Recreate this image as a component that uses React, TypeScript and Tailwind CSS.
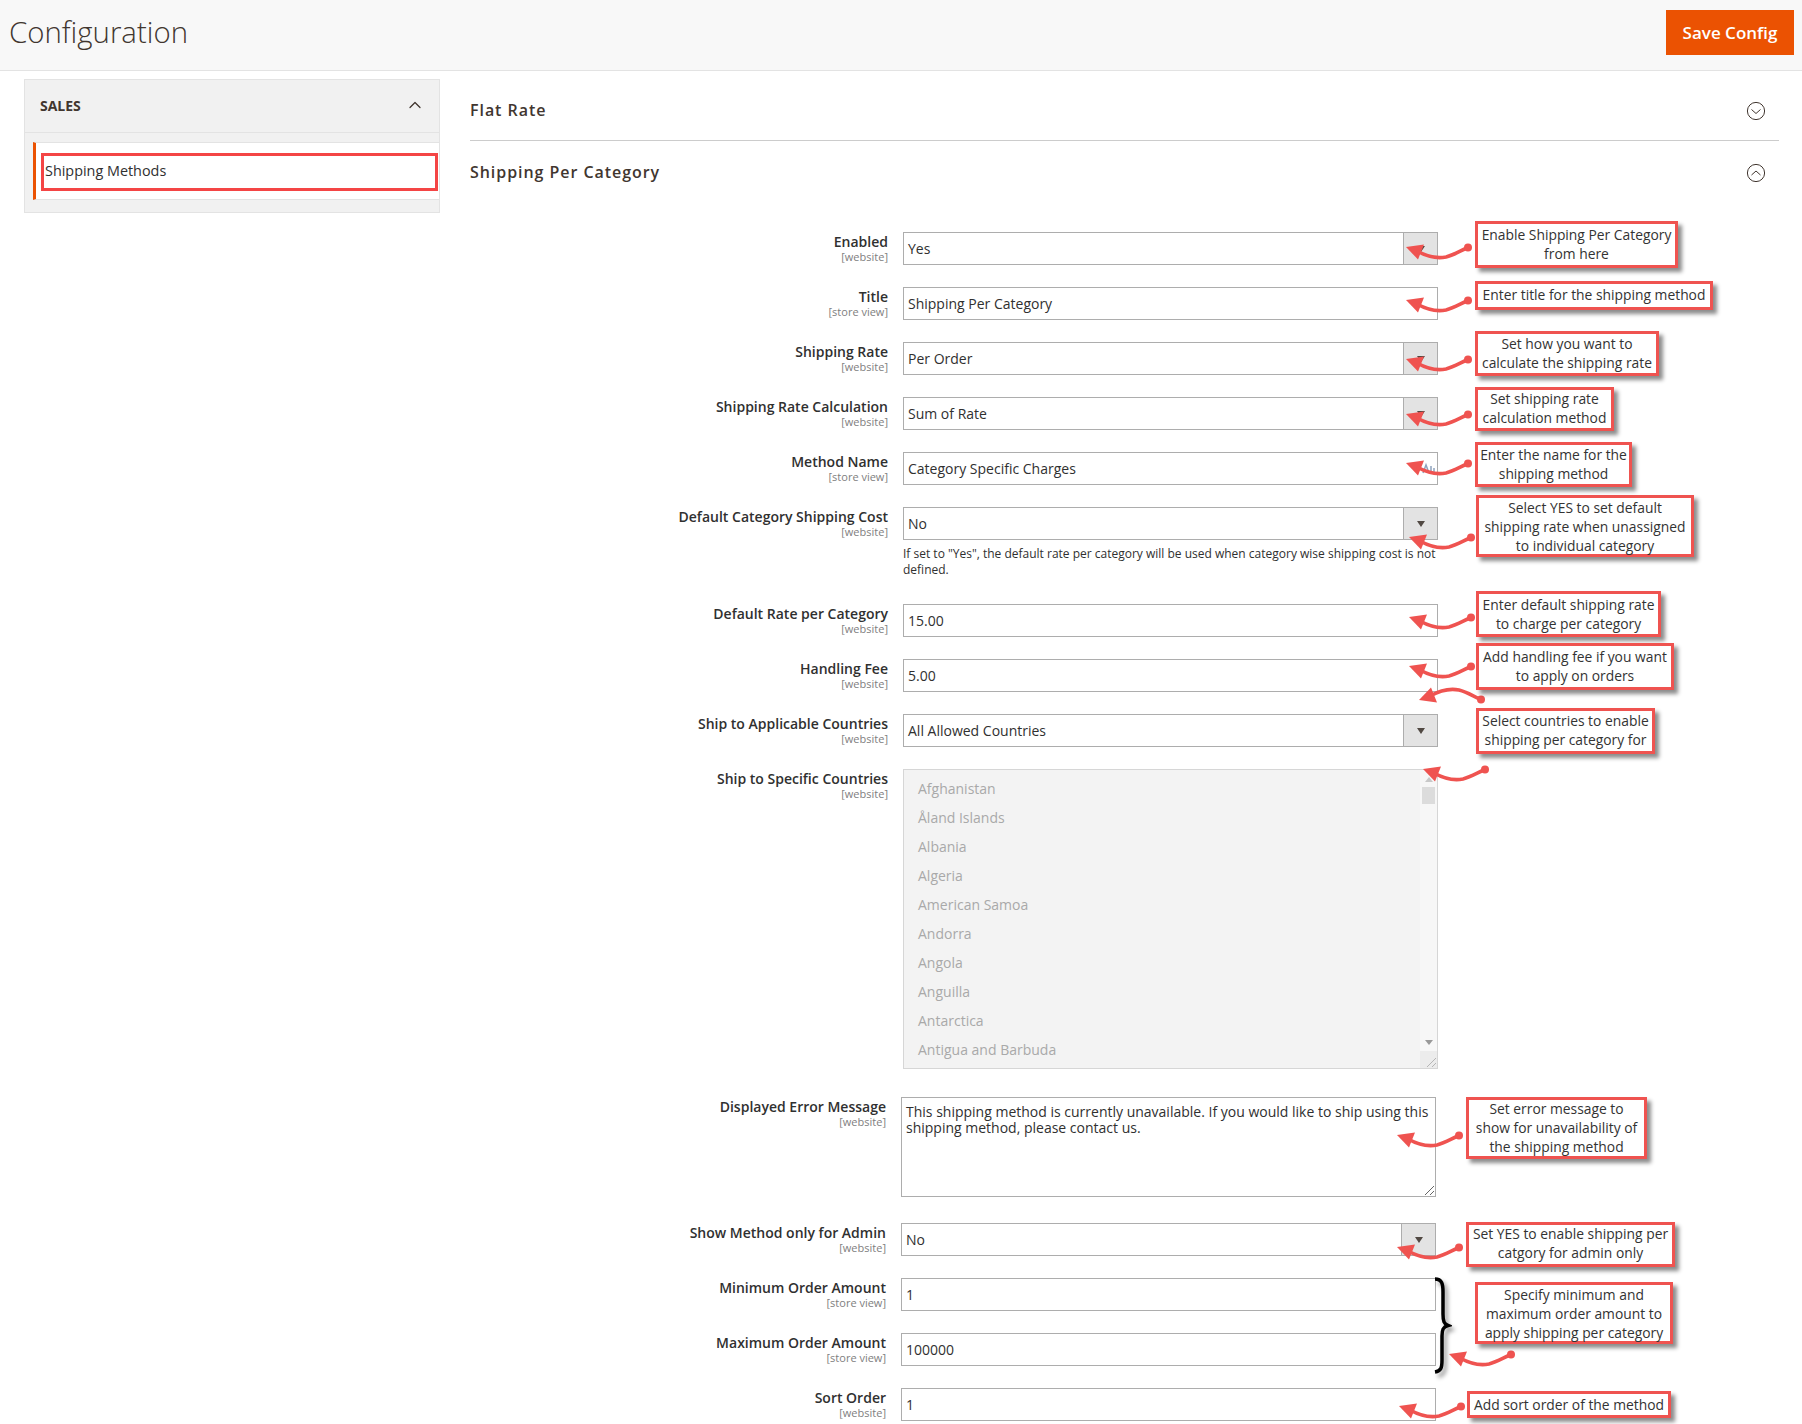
import React from 'react';
import { ChevronUp } from 'lucide-react';

const FONT = 'font-["Open_Sans",sans-serif]';

type Row = {
    label: string;
    scope: string;
    value: string;
    select?: boolean;
    note?: string;
};

const topRows: Row[] = [
    { label: 'Enabled', scope: '[website]', value: 'Yes', select: true },
    { label: 'Title', scope: '[store view]', value: 'Shipping Per Category' },
    { label: 'Shipping Rate', scope: '[website]', value: 'Per Order', select: true },
    { label: 'Shipping Rate Calculation', scope: '[website]', value: 'Sum of Rate', select: true },
    { label: 'Method Name', scope: '[store view]', value: 'Category Specific Charges' },
    {
        label: 'Default Category Shipping Cost',
        scope: '[website]',
        value: 'No',
        select: true,
        note: 'If set to "Yes", the default rate per category will be used when category wise shipping cost is not defined.',
    },
    { label: 'Default Rate per Category', scope: '[website]', value: '15.00' },
    { label: 'Handling Fee', scope: '[website]', value: '5.00' },
    { label: 'Ship to Applicable Countries', scope: '[website]', value: 'All Allowed Countries', select: true },
];

const bottomRows: Row[] = [
    { label: 'Show Method only for Admin', scope: '[website]', value: 'No', select: true },
    { label: 'Minimum Order Amount', scope: '[store view]', value: '1' },
    { label: 'Maximum Order Amount', scope: '[store view]', value: '100000' },
    { label: 'Sort Order', scope: '[website]', value: '1' },
];

const countries = [
    'Afghanistan',
    'Åland Islands',
    'Albania',
    'Algeria',
    'American Samoa',
    'Andorra',
    'Angola',
    'Anguilla',
    'Antarctica',
    'Antigua and Barbuda',
];

// callouts sit on top of the form, so they are placed by hand
const callouts = [
    { x: 1475, y: 221, w: 203, h: 47, pb: 'pb-[2px]', lines: ['Enable Shipping Per Category', 'from here'] },
    { x: 1475, y: 281, w: 238, h: 29, pb: 'pb-[2px]', lines: ['Enter title for the shipping method'] },
    { x: 1475, y: 331, w: 184, h: 45, pb: 'pb-[2px]', lines: ['Set how you want to', 'calculate the shipping rate'] },
    { x: 1475, y: 387, w: 139, h: 44, pb: 'pb-[2px]', lines: ['Set shipping rate', 'calculation method'] },
    { x: 1475, y: 442, w: 157, h: 45, pb: 'pb-[2px]', lines: ['Enter the name for the', 'shipping method'] },
    { x: 1476, y: 495, w: 218, h: 62, pb: 'pb-0', lines: ['Select YES to set default', 'shipping rate when unassigned', 'to individual category'] },
    { x: 1476, y: 591, w: 185, h: 46, pb: 'pb-0', lines: ['Enter default shipping rate', 'to charge per category'] },
    { x: 1476, y: 643, w: 198, h: 47, pb: 'pb-[2px]', lines: ['Add handling fee if you want', 'to apply on orders'] },
    { x: 1476, y: 708, w: 179, h: 46, pb: 'pb-[2px]', lines: ['Select countries to enable', 'shipping per category for'] },
    { x: 1466, y: 1097, w: 181, h: 62, pb: 'pb-[2px]', lines: ['Set error message to', 'show for unavailability of', 'the shipping method'] },
    { x: 1466, y: 1222, w: 209, h: 45, pb: 'pb-[4px]', lines: ['Set YES to enable shipping per', 'catgory for admin only'] },
    { x: 1475, y: 1282, w: 198, h: 62, pb: 'pb-0', lines: ['Specify minimum and', 'maximum order amount to', 'apply shipping per category'] },
    { x: 1467, y: 1391, w: 204, h: 27, pb: 'pb-0', lines: ['Add sort order of the method'] },
];

const arrows = [
    { x: 1406, y: 247 },
    { x: 1406, y: 300 },
    { x: 1406, y: 359 },
    { x: 1406, y: 414 },
    { x: 1406, y: 463 },
    { x: 1409, y: 537 },
    { x: 1409, y: 617 },
    { x: 1409, y: 666 },
    { x: 1423, y: 769 },
    { x: 1397, y: 1135 },
    { x: 1397, y: 1247 },
    { x: 1449, y: 1354 },
    { x: 1399, y: 1406 },
];

const Arrow: React.FC<{ x: number; y: number; flip?: boolean }> = ({ x, y, flip }) => (
    <svg
        className={`absolute ${flip ? '-scale-y-100' : ''}`}
        style={{ left: x, top: flip ? y - 16 : y - 4 }}
        width="68"
        height="20"
        viewBox="0 0 68 20"
    >
        <polygon points="0,4 18,1.5 12,16.5" fill="#ef5350" />
        <path d="M11,8 C20,13 30,16 40,14 C48,12 54,8 61,5" fill="none" stroke="#ef5350" strokeWidth="3.6" />
        <circle cx="62" cy="4.5" r="4" fill="#ef5350" />
    </svg>
);

const Field: React.FC<{ row: Row; wide?: boolean }> = ({ row, wide }) => (
    <div className={`flex gap-[15px] ${row.note ? 'mb-[26px]' : 'mb-[22px]'}`}>
        <div className={`${wide ? 'w-[418px]' : 'w-[416px]'} shrink-0 text-right pt-[1px]`}>
            <div className="text-[14px] leading-[18px] font-semibold text-[#303030]">{row.label}</div>
            <div className="-mt-[1px] text-[11px] leading-[13px] text-[#808080]">{row.scope}</div>
        </div>
        <div className="w-[535px] shrink-0">
            <div className="flex h-[33px] items-stretch border border-[#adadad] bg-white text-[14px] text-[#303030]">
                <div className="flex-1 flex items-center pl-[4px]">{row.value}</div>
                {row.select && (
                    <div className="w-[34px] flex items-center justify-center bg-[#e3e3e3] border-l border-[#adadad]">
                        <div className="w-0 h-0 border-l-[4px] border-r-[4px] border-t-[6px] border-l-transparent border-r-transparent border-t-[#514943]" />
                    </div>
                )}
            </div>
            {row.note && (
                <div className="mt-[6px] text-[12px] leading-[16px] text-[#303030]">{row.note}</div>
            )}
        </div>
    </div>
);

const Collapse: React.FC<{ open?: boolean }> = ({ open }) => (
    <svg className="mt-[2px]" width="20" height="20" viewBox="0 0 20 20" fill="none" stroke="#41362f" strokeWidth="1">
        <circle cx="10" cy="10" r="8.6" />
        <path d={open ? 'M5.5,12 L10,8 L14.5,12' : 'M5.5,8.5 L10,12.5 L14.5,8.5'} />
    </svg>
);

export default function App() {
    return (
        <div className={`${FONT} relative w-[1802px] h-[1424px] overflow-hidden bg-white`}>
            {/* Page title */}
            <div className="h-[71px] flex items-start justify-between pl-[9px] pr-[8px] pt-[10px] bg-[#f8f8f8] border-b border-[#e3e3e3]">
                <h1 className="text-[29.4px] leading-[44px] font-light text-[#41362f]">Configuration</h1>
                <button className="w-[128px] h-[45px] bg-[#eb5202] text-white text-[17px] font-semibold">Save Config</button>
            </div>

            <div className="flex pl-[24px] pt-[8px]">
                {/* Sidebar */}
                <div className="w-[416px] h-[134px] shrink-0 bg-[#f1f1f1] border border-[#e3e3e3]">
                    <div className="h-[53px] flex items-center justify-between pl-[15px] pr-[14px] pb-[2px] border-b border-[#e3e3e3]">
                        <span className="text-[14px] font-bold text-[#41362f]">SALES</span>
                        <ChevronUp size={20} strokeWidth={1.5} className="text-[#41362f]" />
                    </div>
                    <div className="mt-[9px] ml-[8px] h-[58px] flex items-center bg-white border-l-[3px] border-[#eb5202] border-y border-y-[#e3e3e3] pl-[5px] pr-[1px]">
                        <div className="w-full h-[38px] mt-[1px] pb-[1px] flex items-center pl-[1px] border-[3px] border-[#f44545] text-[14.4px] text-[#303030]">
                            Shipping Methods
                        </div>
                    </div>
                </div>

                {/* Sections */}
                <div className="ml-[30px] w-[1309px]">
                    <div className="h-[62px] flex items-center justify-between pr-[13px] border-b border-[#cccccc]">
                        <span className="text-[16px] font-semibold tracking-[0.95px] text-[#41362f]">Flat Rate</span>
                        <Collapse />
                    </div>
                    <div className="h-[62px] flex items-center justify-between pr-[13px]">
                        <span className="text-[16px] font-semibold tracking-[0.95px] text-[#41362f]">Shipping Per Category</span>
                        <Collapse open />
                    </div>

                    <div className="pt-[29px]">
                        {topRows.map((row) => (
                            <Field key={row.label} row={row} wide />
                        ))}

                        {/* Specific countries */}
                        <div className="flex gap-[15px] mb-[28px]">
                            <div className="w-[418px] shrink-0 text-right pt-[1px]">
                                <div className="text-[14px] leading-[18px] font-semibold text-[#303030]">Ship to Specific Countries</div>
                                <div className="-mt-[1px] text-[11px] leading-[13px] text-[#808080]">[website]</div>
                            </div>
                            <div className="relative w-[535px] h-[300px] shrink-0 overflow-hidden bg-[#f3f3f3] border border-[#d6d6d6] pl-[14px] pt-[4px]">
                                {countries.map((c) => (
                                    <div key={c} className="h-[29px] flex items-center text-[14px] text-[#a9a9a9]">{c}</div>
                                ))}
                                <div className="absolute right-0 top-0 bottom-0 w-[17px] flex flex-col items-center bg-[#f7f7f7]">
                                    <div className="mt-[7px] w-0 h-0 border-l-[4px] border-r-[4px] border-b-[5px] border-l-transparent border-r-transparent border-b-[#c8c8c8]" />
                                    <div className="mt-[5px] w-[13px] h-[17px] bg-[#dcdcdc]" />
                                    <div className="mt-auto mb-[6px] w-0 h-0 border-l-[4px] border-r-[4px] border-t-[5px] border-l-transparent border-r-transparent border-t-[#999999]" />
                                    <div className="w-[17px] h-[17px] bg-[#ececec]" />
                                </div>
                                <svg className="absolute right-0 bottom-0" width="12" height="12" viewBox="0 0 12 12" stroke="#b5b5b5">
                                    <path d="M2,11 L11,2 M7,11 L11,7" />
                                </svg>
                            </div>
                        </div>

                        {/* Lower rows sit 2px further left in the original */}
                        <div className="flex gap-[15px] mb-[26px]">
                            <div className="w-[416px] shrink-0 text-right pt-[1px]">
                                <div className="text-[14px] leading-[18px] font-semibold text-[#303030]">Displayed Error Message</div>
                                <div className="-mt-[1px] text-[11px] leading-[13px] text-[#808080]">[website]</div>
                            </div>
                            <div className="relative w-[535px] h-[100px] shrink-0 border border-[#adadad] bg-white pl-[4px] pt-[6px] text-[14px] leading-[16px] text-[#303030]">
                                This shipping method is currently unavailable. If you would like to ship using this shipping method, please contact us.
                                <svg className="absolute right-0 bottom-0" width="12" height="12" viewBox="0 0 12 12" stroke="#666666">
                                    <path d="M2,11 L11,2 M7,11 L11,7" />
                                </svg>
                            </div>
                        </div>
                        {bottomRows.map((row) => (
                            <Field key={row.label} row={row} />
                        ))}
                    </div>
                </div>
            </div>

            {/* Annotations */}
            <svg className="absolute left-[1421px] top-[461px]" width="16" height="14" viewBox="0 0 16 14" fill="none" stroke="#8fa3bd" strokeWidth="1.5">
                <path d="M2,12 L5,4 L8,12 M10,12 L10,5 M13,12 L13,7" />
            </svg>
            <svg className="absolute left-[1432px] top-[1276px] drop-shadow-[3px_4px_2px_rgba(0,0,0,0.4)]" width="20" height="100" viewBox="0 0 20 100">
                <path d="M3,3 C10,3 11,8 11,16 L11,38 C11,45 12,48 16,49.5 C11,51 10,54 10,60 L10,84 C10,92 9,95 3,96" fill="none" stroke="#000000" strokeWidth="3.5" />
            </svg>
            {arrows.map((a) => (
                <Arrow key={a.y} x={a.x} y={a.y} />
            ))}
            <Arrow x={1419} y={700} flip />
            {callouts.map((c) => (
                <div
                    key={c.y}
                    className={`absolute flex flex-col items-center justify-center bg-white border-[3px] border-[#ef5350] shadow-[4px_4px_4px_rgba(0,0,0,0.45)] text-[13.85px] leading-[19px] whitespace-nowrap text-[#333333] ${c.pb}`}
                    style={{ left: c.x, top: c.y, width: c.w, height: c.h }}
                >
                    {c.lines.map((l) => (
                        <div key={l}>{l}</div>
                    ))}
                </div>
            ))}
        </div>
    );
}
